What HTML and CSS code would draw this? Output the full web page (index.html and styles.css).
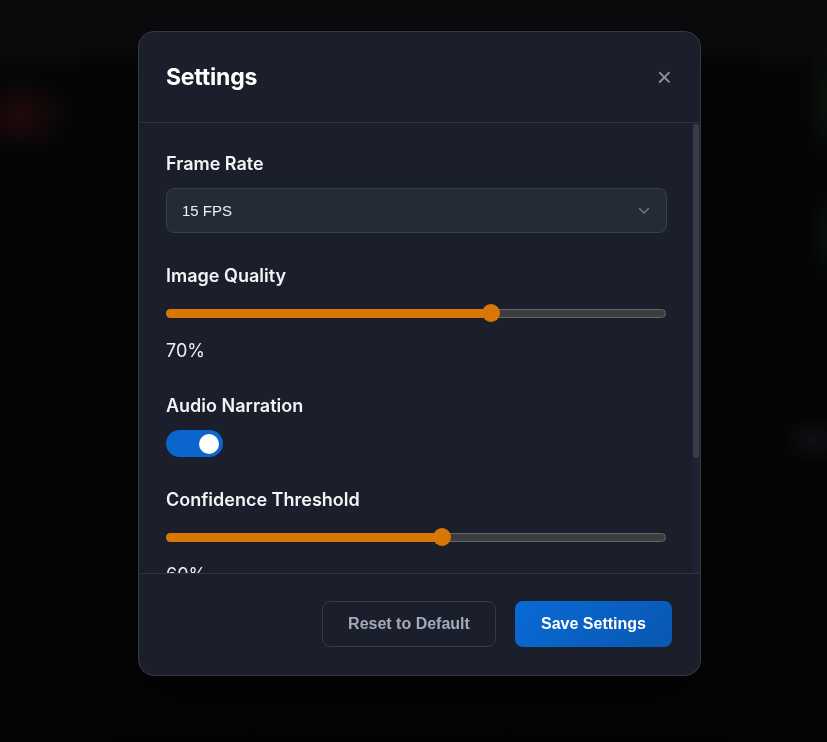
FILE: index.html
```html
<!DOCTYPE html>
<html lang="en">
<head>
<meta charset="utf-8">
<title>Settings</title>
<link rel="stylesheet" href="styles.css">
</head>
<body>
<div class="backdrop">
  <div class="overlay">
    <div class="modal">
      <div class="modal-header">
        <h2 class="modal-title">Settings</h2>
        <button class="close-btn" aria-label="Close">×</button>
      </div>
      <div class="body-wrap">
        <div class="modal-body">
          <div class="field">
            <div class="label">Frame Rate</div>
            <div class="select">
              <span>15 FPS</span>
              <svg class="chevron" width="12" height="8" viewBox="0 0 12 8"><path d="M1.5 1.5 L6 6 L10.5 1.5" fill="none" stroke="#6b7280" stroke-width="1.6" stroke-linecap="round" stroke-linejoin="round"/></svg>
            </div>
          </div>
          <div class="field">
            <div class="label">Image Quality</div>
            <div class="slider">
              <div class="track">
                <div class="fill" style="width:65%"></div>
                <div class="thumb" style="left:65%"></div>
              </div>
            </div>
            <div class="value">70%</div>
          </div>
          <div class="field">
            <div class="label">Audio Narration</div>
            <div class="toggle"><div class="knob"></div></div>
          </div>
          <div class="field">
            <div class="label">Confidence Threshold</div>
            <div class="slider">
              <div class="track">
                <div class="fill" style="width:55.2%"></div>
                <div class="thumb" style="left:55.2%"></div>
              </div>
            </div>
            <div class="value">60%</div>
          </div>
        </div>
        <div class="scrollbar"><div class="scroll-thumb"></div></div>
      </div>
      <div class="modal-footer">
        <button class="btn btn-secondary">Reset to Default</button>
        <button class="btn btn-primary">Save Settings</button>
      </div>
    </div>
  </div>
</div>
</body>
</html>
```
FILE: styles.css
```css
* { box-sizing: border-box; }
html, body { margin: 0; padding: 0; height: 100%; }
body {
  background-color: #040406;
  background-image:
    radial-gradient(ellipse 50px 38px at 20px 115px, rgba(90, 20, 20, 0.32), rgba(90, 20, 20, 0) 100%),
    radial-gradient(ellipse 22px 60px at 827px 100px, rgba(25, 60, 25, 0.25), rgba(25, 60, 25, 0) 100%),
    radial-gradient(ellipse 18px 45px at 827px 235px, rgba(25, 60, 25, 0.22), rgba(25, 60, 25, 0) 100%),
    radial-gradient(ellipse 35px 25px at 815px 440px, rgba(40, 40, 48, 0.3), rgba(40, 40, 48, 0) 100%),
    linear-gradient(180deg, #0b0b0d 0px, #0a0a0c 50px, #050507 70px, #040406 100%);
  font-family: Inter, "Noto Sans", sans-serif;
  color: #f3f4f6;
  overflow: hidden;
}
.backdrop { width: 100%; height: 100%; }
.overlay {
  position: fixed;
  inset: 0;
  display: flex;
  justify-content: center;
  align-items: flex-start;
  padding: 31px 0 0 12px;
}
.modal {
  width: 563px;
  background: #1b1f2b;
  border: 1px solid #343946;
  border-radius: 16px;
  overflow: hidden;
  box-shadow: 0 20px 50px rgba(0, 0, 0, 0.5);
}
.modal-header {
  height: 91px;
  padding: 0 28px 0 27px;
  display: flex;
  align-items: center;
  justify-content: space-between;
  border-bottom: 1px solid #2e3340;
}
.modal-title {
  margin: 0;
  font-size: 23px;
  font-weight: 700;
  color: #ffffff;
  letter-spacing: -0.2px;
}
.close-btn {
  background: none;
  border: none;
  padding: 0;
  margin-right: 0;
  color: #8a909e;
  font-family: "Liberation Sans", Arial, sans-serif;
  font-size: 26px;
  line-height: 1;
  cursor: pointer;
}
.body-wrap {
  height: 450px;
  display: flex;
}
.modal-body {
  flex: 1;
  overflow: hidden;
  padding: 28px 24px 28px 27px;
}
.scrollbar {
  width: 8px;
  background: #1f2331;
  padding: 1px 1px 0 1px;
}
.scroll-thumb {
  height: 334px;
  background: #373c49;
  border-radius: 3px;
}
.field { margin-bottom: 30px; }
.label {
  font-size: 18px;
  font-weight: 600;
  line-height: 25px;
  color: #f3f4f6;
  margin-bottom: 12px;
}
.select {
  height: 45px;
  width: 501px;
  border: 1px solid #383e4c;
  background: #252a37;
  border-radius: 8px;
  padding: 0 16px 0 15px;
  display: flex;
  align-items: center;
  justify-content: space-between;
  font-family: "Liberation Sans", Arial, sans-serif;
  font-size: 15px;
  color: #eef0f3;
}
.chevron { margin-top: 1px; }
.slider {
  width: 500px;
  height: 26px;
  display: flex;
  align-items: center;
}
.track {
  position: relative;
  width: 100%;
  height: 9px;
  border-radius: 5px;
  background: #3d3d3f;
  border: 1px solid #66666a;
}
.fill {
  position: absolute;
  left: -1px;
  top: -1px;
  bottom: -1px;
  background: #d97706;
  border-radius: 5px 0 0 5px;
}
.thumb {
  position: absolute;
  top: 50%;
  width: 18px;
  height: 18px;
  margin: -9px 0 0 -9px;
  border-radius: 50%;
  background: #d97706;
}
.value {
  margin-top: 12px;
  font-size: 18px;
  line-height: 25px;
  color: #eceef2;
}
.toggle {
  width: 57px;
  height: 27px;
  border-radius: 14px;
  background: #0a66cc;
  display: flex;
  align-items: center;
  justify-content: flex-end;
  padding-right: 4px;
}
.knob {
  width: 20px;
  height: 20px;
  border-radius: 50%;
  background: #ffffff;
}
.modal-footer {
  border-top: 1px solid #2e3340;
  padding: 27px 28px 28px;
  display: flex;
  justify-content: flex-end;
  gap: 19px;
}
.btn {
  height: 46px;
  border-radius: 8px;
  font-family: "Liberation Sans", Arial, sans-serif;
  font-size: 16px;
  font-weight: 700;
  cursor: pointer;
}
.btn-secondary {
  width: 174px;
  background: transparent;
  border: 1px solid #353a47;
  color: #a4aabb;
}
.btn-primary {
  width: 157px;
  border: none;
  background: linear-gradient(135deg, #0a6ad6 0%, #0957b0 100%);
  color: #ffffff;
}
```
